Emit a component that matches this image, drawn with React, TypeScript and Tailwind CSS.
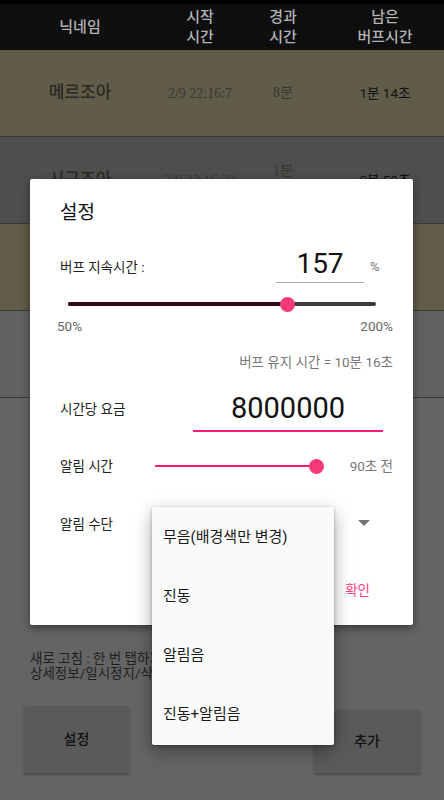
import React from "react";

const F = "font-['Roboto','Noto_Sans_CJK_KR',sans-serif]";

function Row({
  bg,
  name,
  start,
  elapsed,
  left,
}: {
  bg: string;
  name: string;
  start: string;
  elapsed: React.ReactNode;
  left: string;
}) {
  return (
    <div className={`grid grid-cols-[160px_80px_86px_118px] items-center h-[87px] border-b border-[#3a3a3a] ${bg}`}>
      <div className="text-center text-[17px] font-medium text-[#2b2921]">{name}</div>
      <div className="text-center text-[14px] text-[#3a372f] font-['Liberation_Serif','Noto_Sans_CJK_KR',serif]">{start}</div>
      <div className="text-center text-[14px] leading-[18px] text-[#3a372f] font-['Liberation_Serif','Noto_Sans_CJK_KR',serif]">{elapsed}</div>
      <div className="text-center text-[13.5px] text-[#111]">{left}</div>
    </div>
  );
}

export default function App() {
  return (
    <div className={`relative w-[444px] h-[800px] overflow-hidden bg-[#646464] ${F}`}>
      <div className="h-[4px] bg-black" />
      <div className="grid grid-cols-[160px_80px_86px_118px] items-center h-[46px] bg-[#0e0e0e] text-[15px] leading-[20px] font-medium text-[#b3b3b3]">
        <div className="text-center">닉네임</div>
        <div className="text-center">시작<br />시간</div>
        <div className="text-center">경과<br />시간</div>
        <div className="text-center">남은<br />버프시간</div>
      </div>
      <Row bg="bg-[#615c4a]" name="메르조아" start="2/9 22:16:7" elapsed="8분" left="1분 14초" />
      <Row bg="bg-[#4e4e4e]" name="시구조아" start="2/9 22:16:30" elapsed={<>1분<br />30초</>} left="0분 59초" />
      <Row bg="bg-[#625c49]" name="" start="" elapsed="" left="" />
      <Row bg="bg-[#616161]" name="" start="" elapsed="" left="" />

      <div className="pl-[30px] pt-[253px] text-[13.5px] leading-[15px] text-[#1f1f1f]">
        <div>새로 고침 : 한 번 탭하기</div>
        <div>상세정보/일시정지/삭제</div>
      </div>
      <div className="flex justify-between px-[24px] pt-[25px]">
        <div className="w-[105px] h-[67px] bg-[#5a5a5a] rounded-[2px] shadow-[0_2px_3px_rgba(0,0,0,0.25)] flex items-center justify-center text-[14px] font-medium text-[#111]">설정</div>
        <div className="w-[106px] h-[63px] mt-[4px] bg-[#5a5a5a] rounded-[2px] shadow-[0_2px_3px_rgba(0,0,0,0.25)] flex items-center justify-center text-[14px] font-medium text-[#111]">추가</div>
      </div>

      {/* Dialog */}
      <div className="absolute left-[30px] top-[179px] w-[383px] h-[446px] bg-white rounded-[2px] shadow-[0_3px_8px_rgba(0,0,0,0.45)] px-[30px] flex flex-col">
        <div className="pt-[22px] text-[19px] leading-[24px] text-[#111]">설정</div>

        <div className="flex items-end mt-[19px] h-[39px]">
          <div className="text-[13.5px] leading-[16px] text-[#222] pb-[8px] w-[216px]">버프 지속시간 :</div>
          <div className="w-[88px] border-b border-[#aaaaaa] text-center text-[28px] leading-[34px] pb-[1px] text-[#111]">157</div>
          <div className="ml-[6px] text-[13px] leading-[16px] text-[#777] pb-[8px]">%</div>
        </div>

        <div className="relative mt-[19px] ml-[8px] w-[308px] h-[4px] rounded-full bg-[#3b3b3b]">
          <div className="h-[4px] w-[219px] rounded-full bg-[#2d0b17]" />
          <div className="absolute left-[212px] top-[-5.5px] w-[15px] h-[15px] rounded-full bg-[#f7397a]" />
        </div>

        <div className="flex justify-between -ml-[3px] -mr-[10px] mt-[12px] text-[13.5px] leading-[16px] text-[#666]">
          <span>50%</span>
          <span>200%</span>
        </div>

        <div className="text-right -mr-[10px] mt-[20px] text-[13.5px] leading-[16px] text-[#777]">버프 유지 시간 = 10분 16초</div>

        <div className="flex items-end mt-[20px] h-[42px]">
          <div className="text-[13.5px] leading-[16px] text-[#222] pb-[15px] w-[133px]">시간당 요금</div>
          <div className="w-[190px] border-b-2 border-[#ff1a75] text-center text-[29px] leading-[36px] text-[#111] pb-[4px]">8000000</div>
        </div>

        <div className="flex items-center mt-[24px] h-[20px]">
          <div className="text-[13.5px] leading-[16px] text-[#222] w-[95px]">알림 시간</div>
          <div className="relative w-[162px] h-[2px] bg-[#ff1a75]">
            <div className="absolute left-[154px] top-[-6.5px] w-[15px] h-[15px] rounded-full bg-[#f7397a]" />
          </div>
          <div className="ml-auto -mr-[10px] text-[13.5px] leading-[16px] text-[#777]">90초 전</div>
        </div>

        <div className="flex items-center mt-[38px] h-[20px]">
          <div className="text-[13.5px] leading-[16px] text-[#222]">알림 수단</div>
          <div className="ml-auto mr-[13px] -mt-[2px] w-0 h-0 border-l-[6px] border-r-[6px] border-t-[6px] border-l-transparent border-r-transparent border-t-[#757575]" />
        </div>

        <div className="flex justify-end mt-[48px] mr-[13px]">
          <span className="text-[13.5px] leading-[16px] text-[#ff4081]">확인</span>
        </div>
      </div>

      {/* Dropdown menu */}
      <div className="absolute left-[152px] top-[507px] w-[182px] h-[238px] bg-[#fafafa] rounded-[2px] shadow-[0_6px_18px_rgba(0,0,0,0.35),0_1px_3px_rgba(0,0,0,0.3)] pt-[1px] flex flex-col">
        {["무음(배경색만 변경)", "진동", "알림음", "진동+알림음"].map((t) => (
          <div key={t} className="h-[59px] flex items-center pl-[11px] text-[15px] text-[#1a1a1a]">{t}</div>
        ))}
      </div>
    </div>
  );
}
